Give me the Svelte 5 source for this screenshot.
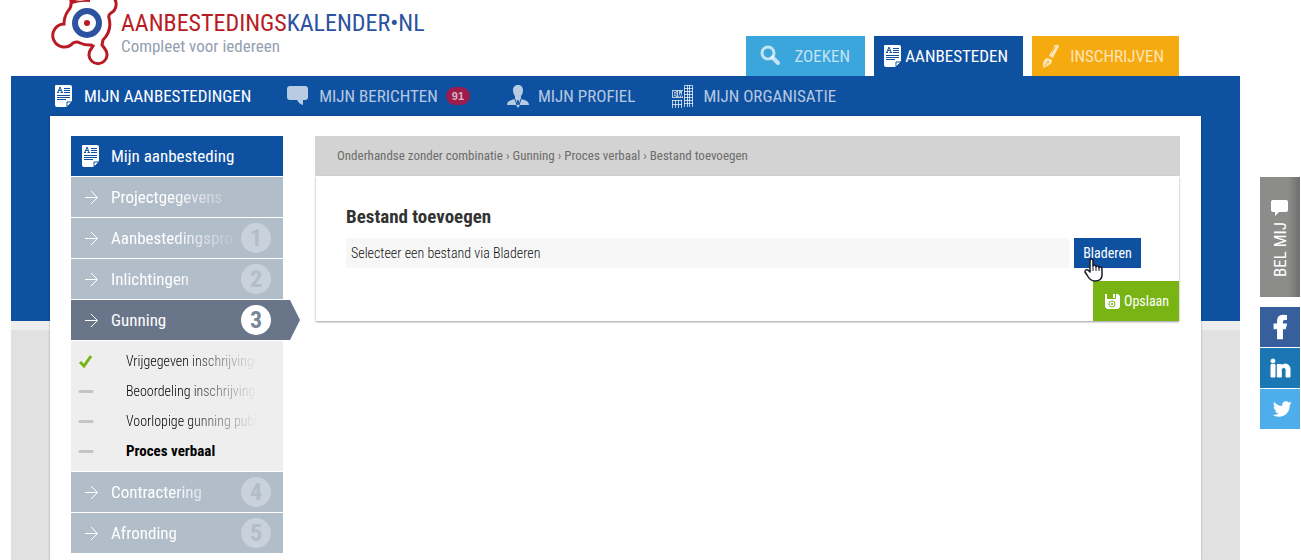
<script>
	const tabs = [
		{ id: 'zoeken', label: 'Zoeken', icon: 'search' },
		{ id: 'aanbesteden', label: 'Aanbesteden', icon: 'document' },
		{ id: 'inschrijven', label: 'Inschrijven', icon: 'pen' }
	];

	const navItems = [
		{ label: 'Mijn aanbestedingen', icon: 'document', active: true },
		{ label: 'Mijn berichten', icon: 'message', count: 91 },
		{ label: 'Mijn profiel', icon: 'profile' },
		{ label: 'Mijn organisatie', icon: 'building' }
	];

	const phases = [
		{ label: 'Projectgegevens' },
		{ label: 'Aanbestedingsprocedure', step: 1 },
		{ label: 'Inlichtingen', step: 2 },
		{
			label: 'Gunning',
			step: 3,
			children: [
				{ label: 'Vrijgegeven inschrijvingen', done: true },
				{ label: 'Beoordeling inschrijvingen' },
				{ label: 'Voorlopige gunning publiceren' },
				{ label: 'Proces verbaal', current: true }
			]
		},
		{ label: 'Contractering', step: 4 },
		{ label: 'Afronding', step: 5 }
	];

	const crumbs = ['Onderhandse zonder combinatie', 'Gunning', 'Proces verbaal', 'Bestand toevoegen'];

	let activeTab = $state('aanbesteden');
	let activePhase = $state('Gunning');
	let fileName = $state('Selecteer een bestand via Bladeren');
</script>

{#snippet icon(name)}
	<svg class="icon" width="24" height="24" viewBox="0 0 24 24" aria-hidden="true">
		{#if name === 'document'}
			<path fill="#fff" d="M4 1h14q2 0 2 2v14l-5 6H5q-2 0-2-2V2q0-1 1-1z" />
			<path fill="none" stroke="#0f51a1" d="M12 4.500h6M12 6.500h6M12 8.500h6M5 11.500h13M5 13.500h13M5 15.500h9M5 8.500h2M8.500 8.500h2.500M6 8l2-5 2 5M7 6.500h2" />
			<path fill="#fff" stroke="#0f51a1" d="M15 23v-5h5z" />
		{:else if name === 'search'}
			<circle cx="10" cy="9" r="6" fill="none" stroke="currentColor" stroke-width="3" />
			<path d="M14.500 13.500l5.500 5.500" stroke="currentColor" stroke-width="4" stroke-linecap="round" />
		{:else if name === 'pen'}
			<path fill="currentColor" d="M16 1q3-1 4 1l-6 12-4-2z" />
			<path fill="currentColor" d="M8 14l5 2q0 4-3 5l-5 3-1-1v-4q1-4 4-5z" />
			<path d="M5 23l3-4M13 8l3-5" stroke="#f5aa10" />
			<circle cx="9" cy="18" r="1" fill="#f5aa10" />
		{:else if name === 'message'}
			<path fill="currentColor" d="M3 2h15q3 0 3 3v8q0 3-3 3h-2v5q-4-1-6-5H3q-3 0-3-3V5q0-3 3-3z" />
		{:else if name === 'profile'}
			<path fill="currentColor" d="M12 1c3 0 5 2 5 5 0 3-1 5-2 6v3c4 1 8 2 8 6H14l-2 3-2-3H1c0-4 4-5 8-6v-3C8 11 7 9 7 6c0-3 2-5 5-5z" />
			<path d="M9 15l2 6 1-5 1 5 2-6" fill="none" stroke="#0f51a1" />
		{:else if name === 'building'}
			<path
				fill="none"
				stroke="currentColor"
				d="M13.500 23V1.500h8V23M16.500 1v22M18.500 1v22M13 4.500h9M13 7.500h9M13 10.500h9M13 13.500h9M13 16.500h9M13 19.500h9M1.500 24v-8M4.500 16v8M7.500 16v8M10.500 16v8M1 16.500h10M1 20.500h10"
			/>
			<path fill="currentColor" d="M1 6h11v8H1z" />
			<path fill="none" stroke="#0f51a1" d="M2.500 7.500h2l1 1-1 1.500h-2M4.500 10l1 1-1 1.500h-2v-5M7.500 7v5l1 .5 1-3 1 3 1-.5V7" />
		{:else if name === 'save'}
			<path fill="currentColor" d="M5 5h2v5h9V5h2l2 2v11l-2 2H7l-2-2z" />
			<path fill="currentColor" d="M13 5h2v4h-2z" />
			<circle cx="12" cy="15" r="3" fill="none" stroke="#78b514" />
			<circle cx="12" cy="15" r="1" fill="#78b514" />
		{/if}
	</svg>
{/snippet}

<div class="page">
	<header class="header">
		<a class="logo" href="#home">
			<svg class="logo-mark" width="68" height="66" viewBox="0 0 68 66" aria-hidden="true">
				<path
					class="logo-outline"
					d="M20-3Q23 6 18 11A23 23 0 0 0 14 24A11.500 11.500 0 1 0 23 43Q27 41 30 43A23 23 0 0 0 41 45L43 46 41 49A9 9 0 1 0 55 49L52 45 53 40A23 23 0 0 0 59 18Q58 15 61 13A10 10 0 0 0 63-3"
				/>
				<path d="M22-1q9 4 18-1v4q-9-1-18 2z" fill="#b91b25" />
				<circle cx="37" cy="23" r="12" fill="none" stroke="#2c52a0" stroke-width="6" />
				<circle cx="37" cy="23" r="3" fill="#b91b25" />
			</svg>
			<span class="logo-text">
				<span class="logo-name"><b>AANBESTEDINGS</b>KALENDER•NL</span>
				<span class="logo-tagline">Compleet voor iedereen</span>
			</span>
		</a>
		<nav class="tabs">
			{#each tabs as tab}
				<button
					type="button"
					class="tab {tab.id}"
					class:active={tab.id === activeTab}
					onclick={() => (activeTab = tab.id)}
				>
					{@render icon(tab.icon)}
					<span>{tab.label}</span>
				</button>
			{/each}
		</nav>
	</header>

	<div class="stage">
		<nav class="main-nav">
			{#each navItems as item}
				<a class="nav-link" class:active={item.active} href="#nav">
					{@render icon(item.icon)}
					<span>{item.label}</span>
					{#if item.count}
						<span class="count">{item.count}</span>
					{/if}
				</a>
			{/each}
		</nav>

		<div class="content">
			<aside class="sidebar">
				<a class="phase title" href="#tender">
					{@render icon('document')}
					<span class="label">Mijn aanbesteding</span>
				</a>
				{#each phases as phase}
					<button
						type="button"
						class="phase"
						class:active={phase.label === activePhase}
						onclick={() => (activePhase = phase.label)}
					>
						<svg class="arrow" width="24" height="24" viewBox="0 0 24 24" aria-hidden="true">
							<path d="M6 12.500h12M12 6l6.500 6.500L12 19" fill="none" stroke="#fff" />
						</svg>
						<span class="label">{phase.label}</span>
						{#if phase.step}
							<span class="step">{phase.step}</span>
						{/if}
					</button>
					{#if phase.children && phase.label === activePhase}
						<ul class="steps">
							{#each phase.children as child}
								<li>
									<a href="#step" class:current={child.current}>
										<svg width="16" height="16" viewBox="0 0 16 16" aria-hidden="true">
											{#if child.done}
												<path d="M2 9l4 4 7-10" fill="none" stroke="#73b512" stroke-width="3" />
											{:else}
												<path d="M2 8.500h12" stroke="#c4c4c4" stroke-width="3" stroke-linecap="round" />
											{/if}
										</svg>
										<span class="label">{child.label}</span>
									</a>
								</li>
							{/each}
						</ul>
					{/if}
				{/each}
			</aside>

			<main class="main">
				<nav class="breadcrumb">
					{#each crumbs as crumb, i}
						{#if i > 0}{' › '}{/if}<a href="#crumb">{crumb}</a>
					{/each}
				</nav>
				<form class="panel" onsubmit={(e) => e.preventDefault()}>
					<div class="upload">
						<label for="file-name">Bestand toevoegen</label>
						<div class="file-row">
							<input id="file-name" type="text" readonly value={fileName} />
							<button type="button" class="browse">
								Bladeren
								<svg class="pointer" width="20" height="26" viewBox="0 0 20 26" aria-hidden="true">
									<path
										fill="#fff"
										stroke="#1c1c2c"
										stroke-width="1.500"
										stroke-linejoin="round"
										d="M6 14V3q0-2 1.500-2T9 3v5q0-1 1.500-1T12 9q0-1 1.500-1T15 10q0-1 1.500-1T18 11v6q0 6-7 6-5 0-8-6l-2-3q0-3 3-2z"
									/>
									<path d="M9 8v5M12 9v4M15 10v3" stroke="#1c1c2c" />
								</svg>
							</button>
						</div>
					</div>
					<button type="submit" class="save">
						{@render icon('save')}
						<span>Opslaan</span>
					</button>
				</form>
			</main>
		</div>
	</div>
</div>

<aside class="side-bar">
	<button type="button" class="call">
		<span>Bel mij</span>
		<svg width="20" height="20" viewBox="0 0 20 20" aria-hidden="true">
			<path fill="#fff" d="M3 2h13q2 0 2 2v8q0 2-2 2H9l-4 4v-4H3q-2 0-2-2V4q0-2 2-2z" transform="rotate(180 10 10)" />
		</svg>
	</button>
	<a class="social facebook" href="#facebook" aria-label="Facebook">
		<svg width="28" height="28" viewBox="0 0 24 24">
			<path d="M14 13.500h2.500l1-4H14v-2c0-1.030 0-2 2-2h1.500V2.140c-.326-.043-1.557-.14-2.857-.14C11.928 2 10 3.657 10 6.700v2.800H7v4h3V22h4v-8.500z" />
		</svg>
	</a>
	<a class="social linkedin" href="#linkedin" aria-label="LinkedIn">
		<svg width="24" height="24" viewBox="0 0 24 24">
			<path d="M6.940 5a2 2 0 1 1-4-.002 2 2 0 0 1 4 .002zM7 8.480H3V21h4V8.480zm6.320 0H9.340V21h3.940v-6.570c0-3.660 4.770-4 4.770 0V21H22v-7.930c0-6.170-7.060-5.940-8.720-2.910l.04-1.680z" />
		</svg>
	</a>
	<a class="social twitter" href="#twitter" aria-label="Twitter">
		<svg width="20" height="20" viewBox="0 0 24 24">
			<path d="M23.643 4.937c-.835.37-1.732.62-2.675.733.962-.576 1.700-1.490 2.048-2.578-.9.534-1.897.922-2.958 1.130-.85-.904-2.060-1.470-3.400-1.470-2.572 0-4.658 2.086-4.658 4.660 0 .364.042.718.120 1.060-3.873-.195-7.304-2.050-9.602-4.868-.4.690-.63 1.490-.63 2.342 0 1.616.823 3.043 2.072 3.878-.764-.025-1.482-.234-2.110-.583v.06c0 2.257 1.605 4.140 3.737 4.568-.392.106-.803.162-1.227.162-.3 0-.593-.028-.877-.082.593 1.850 2.313 3.198 4.352 3.234-1.595 1.250-3.604 1.995-5.786 1.995-.376 0-.747-.022-1.112-.065 2.062 1.323 4.510 2.093 7.140 2.093 8.570 0 13.255-7.098 13.255-13.254 0-.2-.005-.402-.014-.602.910-.658 1.700-1.477 2.323-2.410z" />
		</svg>
	</a>
</aside>

<style>
	:global(body) {
		background: #fff;
		font-family: 'Roboto Condensed', 'Liberation Sans Narrow', Roboto, sans-serif;
	}

	a {
		color: inherit;
		text-decoration: none;
	}

	button {
		margin: 0;
		padding: 0;
		border: none;
		font: inherit;
		color: inherit;
		cursor: pointer;
	}

	svg {
		display: block;
		flex-shrink: 0;
	}

	.page {
		margin: 0 61px 0 11px;
	}

	.header {
		display: flex;
		justify-content: space-between;
		height: 76px;
		padding: 0 61px 0 39px;
	}

	.logo {
		display: flex;
		gap: 3px;
	}

	.logo-outline {
		fill: #fff;
		stroke: #b91b25;
		stroke-width: 3;
	}

	.logo-text {
		display: flex;
		flex-direction: column;
		padding-top: 8px;
		white-space: nowrap;
	}

	.logo-name {
		font-size: 24px;
		line-height: 30px;
		color: #2c52a0;
	}

	.logo-name b {
		font-weight: 400;
		color: #b91b25;
	}

	.logo-tagline {
		font-size: 17px;
		line-height: 16px;
		color: #94a0b2;
	}

	.tabs {
		display: flex;
		align-items: flex-end;
		gap: 9px;
	}

	.tab {
		display: flex;
		align-items: center;
		justify-content: space-between;
		height: 40px;
		padding: 0 15px 0 12px;
		font-size: 17px;
		text-transform: uppercase;
		color: rgba(255, 255, 255, 0.7);
	}

	.tab.active {
		padding: 0 15px 0 7px;
		color: #fff;
	}

	.tab.zoeken {
		width: 119px;
		background: #3ba6db;
	}

	.tab.aanbesteden {
		width: 149px;
		background: #0f51a1;
	}

	.tab.inschrijven {
		width: 147px;
		padding-left: 7px;
		background: #f5aa10;
	}

	.stage {
		background: linear-gradient(#0f51a1 245px, #eee 245px, #eee 254px, #e1e1e1 254px);
	}

	.main-nav {
		display: flex;
		gap: 36px;
		height: 40px;
		padding: 0 41px;
	}

	.nav-link {
		display: flex;
		align-items: center;
		gap: 8px;
		font-size: 17px;
		text-transform: uppercase;
		white-space: nowrap;
		color: rgba(255, 255, 255, 0.7);
	}

	.nav-link.active {
		color: #fff;
	}

	.count {
		padding: 0 6px;
		border-radius: 9px;
		background: #9f1b4b;
		font: bold 11px/18px 'Liberation Sans', sans-serif;
		color: #d8b3c8;
	}

	.content {
		display: flex;
		align-items: flex-start;
		gap: 32px;
		min-height: calc(100vh - 116px);
		margin: 0 39px;
		padding: 20px 21px 7px;
		box-sizing: border-box;
		background: #fff;
		box-shadow: 0 0 2px rgba(0, 0, 0, 0.3);
	}

	.sidebar {
		display: flex;
		flex-direction: column;
		gap: 1px;
		width: 212px;
		flex-shrink: 0;
	}

	.phase {
		position: relative;
		display: flex;
		align-items: center;
		gap: 8px;
		height: 40px;
		padding: 0 12px 0 8px;
		background: #b2bdca;
		font-size: 17px;
		text-align: left;
		color: #fff;
	}

	.label {
		flex: 1;
		overflow: hidden;
		white-space: nowrap;
	}

	.phase .label {
		mask-image: linear-gradient(90deg, #000 60px, transparent 130px);
	}

	.phase.title {
		background: #0f51a1;
	}

	.phase.title .label,
	.phase.active .label {
		mask-image: none;
	}

	.phase.active {
		background: #697689;
	}

	.phase.active::after {
		content: '';
		position: absolute;
		top: 0;
		left: 100%;
		width: 17px;
		height: 100%;
		background: #697689;
		clip-path: polygon(0 0, 7px 0, 100% 50%, 7px 100%, 0 100%);
	}

	.step {
		width: 30px;
		border-radius: 50%;
		background: rgba(255, 255, 255, 0.3);
		font-size: 24px;
		font-weight: 700;
		line-height: 30px;
		text-align: center;
		color: #b2bdca;
	}

	.active .step {
		background: #fff;
		color: #77869b;
	}

	.steps {
		margin: 0;
		padding: 5px 0;
		list-style: none;
		background: #eee;
	}

	.steps a {
		display: flex;
		align-items: center;
		gap: 32px;
		height: 30px;
		padding: 0 24px 0 7px;
		font-size: 14px;
		font-weight: 300;
		color: #000;
	}

	.steps .label {
		mask-image: linear-gradient(90deg, #000 60px, transparent 132px);
	}

	.steps .current {
		font-size: 15px;
		font-weight: 700;
	}

	.steps .current .label {
		mask-image: none;
	}

	.main {
		flex: 1;
		min-width: 0;
	}

	.breadcrumb {
		padding: 0 22px;
		background: #d3d3d3;
		font-size: 13px;
		line-height: 40px;
		color: #6c6c6c;
	}

	.panel {
		display: flex;
		flex-direction: column;
		align-items: flex-end;
		margin: 0 1px;
		padding-top: 26px;
		box-shadow: 0 1px 2px rgba(0, 0, 0, 0.4);
	}

	.upload {
		align-self: stretch;
		padding: 0 38px 13px 30px;
	}

	.upload label {
		display: block;
		font-size: 19px;
		font-weight: 700;
		line-height: 30px;
		color: #333;
	}

	.file-row {
		display: flex;
		gap: 5px;
		margin-top: 6px;
	}

	.file-row input {
		flex: 1;
		min-width: 0;
		height: 30px;
		padding: 0 5px;
		box-sizing: border-box;
		border: none;
		background: #f7f7f7;
		font: inherit;
		font-size: 14px;
		font-weight: 300;
		color: #111;
	}

	.browse {
		position: relative;
		width: 67px;
		background: #0f51a1;
		font-size: 14px;
		color: #fff;
	}

	.pointer {
		position: absolute;
		top: 20px;
		left: 10px;
	}

	.save {
		display: flex;
		align-items: center;
		justify-content: space-between;
		width: 86px;
		height: 40px;
		padding: 0 10px 0 7px;
		background: #78b514;
		font-size: 14px;
		color: #fff;
	}

	.side-bar {
		position: fixed;
		top: 177px;
		right: 1px;
		display: flex;
		flex-direction: column;
		gap: 1px;
		width: 40px;
	}

	.call {
		display: flex;
		align-items: center;
		justify-content: flex-start;
		gap: 4px;
		height: 120px;
		margin-bottom: 9px;
		padding: 20px 10px;
		box-sizing: border-box;
		writing-mode: vertical-rl;
		transform: rotate(180deg);
		background: linear-gradient(270deg, #8c8c8a 70%, #6f6f6d);
		font-size: 17px;
		line-height: 20px;
		text-transform: uppercase;
		white-space: nowrap;
		color: #fff;
	}

	.social {
		display: flex;
		align-items: center;
		justify-content: center;
		height: 40px;
		fill: #fff;
		stroke: #fff;
		stroke-width: 0;
	}

	.facebook {
		background: #365f9c;
		stroke-width: 1px;
	}

	.linkedin {
		background: #1b77b3;
		stroke-width: 1px;
	}

	.twitter {
		padding-left: 4px;
		background: #4eaeec;
	}
</style>
